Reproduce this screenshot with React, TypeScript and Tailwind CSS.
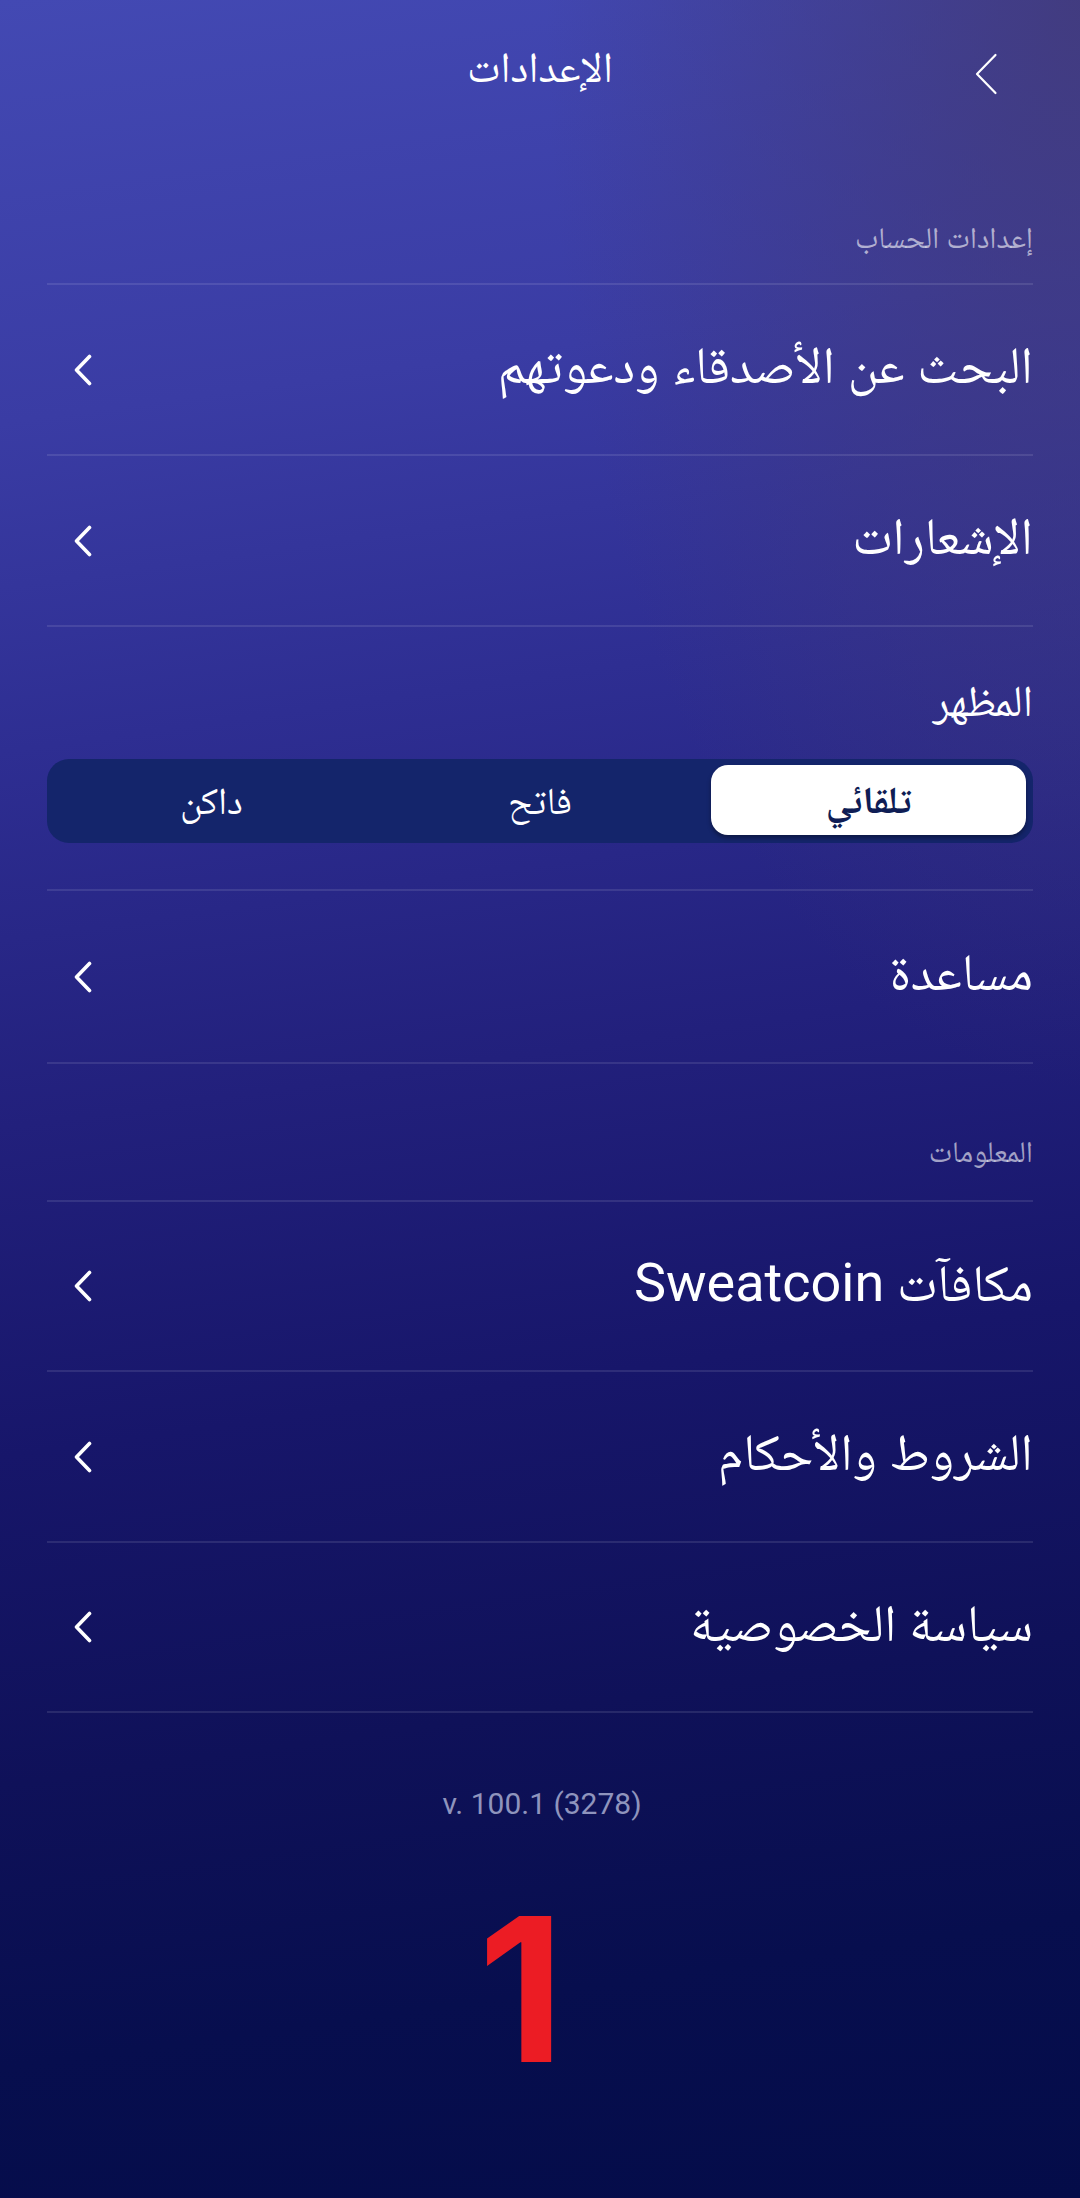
import React from "react";

function Chevron() {
  return (
    <svg width="20" height="32" viewBox="0 0 20 32" className="shrink-0 ml-[26px]">
      <path d="M16.5 2.5 L3.5 16 L16.5 29.5" fill="none" stroke="#ffffff" strokeWidth="3.6" strokeLinecap="round" strokeLinejoin="round" />
    </svg>
  );
}

function Row({ label, h, children }: { label?: string; h: string; children?: React.ReactNode }) {
  return (
    <div className={`border-t-2 border-white/10 flex items-center justify-between ${h}`}>
      <span className="text-white text-[52px] leading-none pb-[7px]">{children ?? label}</span>
      <Chevron />
    </div>
  );
}

export default function App() {
  return (
    <div
      dir="rtl"
      className="w-[1080px] min-h-[2198px] relative overflow-hidden font-[Roboto,'Noto_Naskh_Arabic','Noto_Sans_Arabic','DejaVu_Sans',sans-serif] bg-[linear-gradient(172deg,#4349b3_0%,#3a3ca4_18%,#2e2e92_32%,#22207c_48%,#17166a_62%,#0f1159_76%,#070e4e_88%,#040c49_100%)]"
    >
      <div className="absolute inset-0 pointer-events-none bg-[radial-gradient(ellipse_at_100%_0%,rgba(66,58,120,0.85)_0%,rgba(66,58,120,0)_35%)]" />
      <div className="relative">
        {/* Header */}
        <div className="h-[146px] grid grid-cols-[1fr_auto_1fr] items-center">
          <div className="justify-self-start pr-[82px] pt-[2px]">
            <svg width="24" height="42" viewBox="0 0 24 42">
              <path d="M21.5 2 L3 21 L21.5 40" fill="none" stroke="#ffffff" strokeWidth="2.2" strokeLinecap="round" strokeLinejoin="round" />
            </svg>
          </div>
          <div className="text-white text-[43px] leading-none pb-[12px]">الإعدادات</div>
          <div />
        </div>

        <div className="px-[47px]">
          {/* Account section label */}
          <div className="h-[137px] flex flex-col justify-end pb-[30px]">
            <span className="text-white/60 text-[30px] leading-none">إعدادات الحساب</span>
          </div>

          <Row label="البحث عن الأصدقاء ودعوتهم" h="h-[171px]" />
          <Row label="الإشعارات" h="h-[171px]" />

          {/* Appearance */}
          <div className="border-t-2 border-white/10 h-[264px] flex flex-col">
            <div className="pt-[52px] text-white text-[44px] leading-none">المظهر</div>
            <div className="mt-[36px] h-[84px] rounded-[22px] bg-[#14256b] grid grid-cols-3">
              <div className="pt-[6px] pb-[8px] px-[7px] flex">
                <div className="flex-1 rounded-[17px] bg-white shadow-[0_3px_4px_rgba(0,0,0,0.35)] flex items-center justify-center">
                  <span className="text-[#0f1d55] text-[38px] font-bold leading-none">تلقائي</span>
                </div>
              </div>
              <div className="flex items-center justify-center">
                <span className="text-white text-[38px] leading-none">فاتح</span>
              </div>
              <div className="flex items-center justify-center">
                <span className="text-white text-[38px] leading-none">داكن</span>
              </div>
            </div>
          </div>

          <Row label="مساعدة" h="h-[173px]" />

          {/* Info section label */}
          <div className="border-t-2 border-white/10 h-[138px] flex flex-col justify-end pb-[33px]">
            <span className="text-white/60 text-[30px] leading-none">المعلومات</span>
          </div>

          <Row h="h-[170px]">
            مكافآت <span className="text-[54px]">Sweatcoin</span>
          </Row>
          <Row label="الشروط والأحكام" h="h-[171px]" />
          <Row label="سياسة الخصوصية" h="h-[170px]" />
          <div className="border-t-2 border-white/10" />
        </div>

        {/* Footer */}
        <div className="pt-[76px] flex justify-center pl-[4px]">
          <span dir="ltr" className="text-[#8f94bd] text-[30px] leading-none font-[Roboto,sans-serif]">
            v. 100.1 (3278)
          </span>
        </div>
        <div className="pt-[70px] flex justify-center pr-[38px]">
          <span className="text-[#ec1c24] text-[200px] font-bold leading-none font-[Inter,sans-serif]">
            1
          </span>
        </div>
      </div>
    </div>
  );
}
